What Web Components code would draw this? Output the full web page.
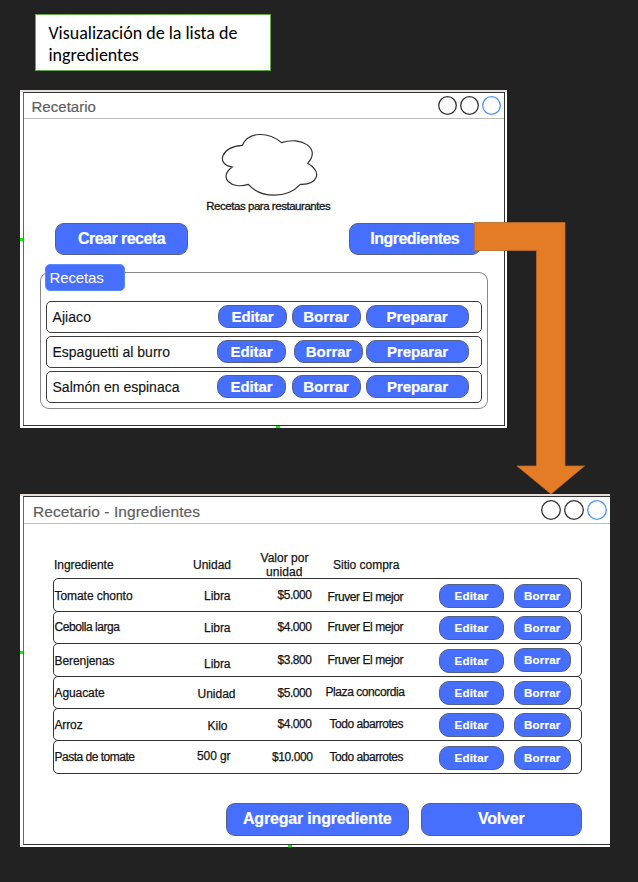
<!DOCTYPE html>
<html lang="es">
<head>
<meta charset="utf-8">
<title>Visualización de la lista de ingredientes</title>
<style>
html,body{margin:0;padding:0}
body{width:638px;height:882px;overflow:hidden;background:#222;font-family:"Liberation Sans",Arial,sans-serif;color:#151515}
</style>
</head>
<body>
<recipe-board></recipe-board>
<script>
const define = (name, html, extra) => customElements.define(name, class extends HTMLElement {
  constructor() {
    super();
    const t = document.createElement('template');
    t.innerHTML = html;
    this.attachShadow({ mode: 'open' }).appendChild(t.content.cloneNode(true));
  }
  connectedCallback() { if (extra) extra(this); }
});

/* One line of text tracked to a given width: w = width, s = font size, l = line height */
define('fit-text', `
<style>
:host{display:block;white-space:nowrap;flex:none}
span{display:inline-block;vertical-align:top}
</style><span><slot></slot></span>`, el => {
  const w = +el.getAttribute('w'), s = el.getAttribute('s'), l = el.getAttribute('l') || 16;
  el.style.fontSize = s + 'px';
  el.style.lineHeight = l + 'px';
  el.style.height = l + 'px';
  el.style.width = w + 'px';
  const span = el.shadowRoot.querySelector('span');
  const n = el.textContent.length;
  span.style.letterSpacing = (w - span.getBoundingClientRect().width) / n + 'px';
});

define('pill-button', `
<style>
:host{display:block;flex:none;box-sizing:border-box}
button{all:unset;box-sizing:border-box;display:flex;align-items:center;justify-content:center;width:100%;height:100%;
border:1px solid #56617f;border-radius:var(--r,9px);background:#476fff;color:#fff;font-weight:bold;-webkit-text-stroke:.2px #fff}
</style><button><slot></slot></button>`, el => {
  el.style.width = el.getAttribute('w') + 'px';
  el.style.height = el.getAttribute('h') + 'px';
});

define('cloud-logo', `
<style>:host{display:block;width:100px;height:66px}svg{display:block}</style>
<svg width="100" height="66" viewBox="60 33 300 198" fill="#fff" stroke="#333" stroke-width="3.6">
<path d="M127 73C145 30 205 32 245 65C300 45 366 80 323 127C370 155 350 192 301 190C262 233 182 233 145 190C95 207 52 170 97 138C45 130 65 75 127 73Z"/></svg>`);

define('app-window', `
<style>
:host{display:block;box-sizing:border-box;position:relative;background:#fff;border-top:2px solid #e6dfdc;flex:none}
.frame{box-sizing:border-box;border:1px solid #333;border-left:1.5px solid #666;height:var(--frame-h);margin-left:var(--fl);margin-right:2px}
:host([cut]) .frame{border-right:0;margin-right:0}
header{box-sizing:border-box;display:flex;align-items:center;justify-content:space-between;height:var(--bar-h);border-bottom:1px solid #bbb;padding:0 var(--pr) 0 8px;color:#606060;-webkit-text-stroke:.2px #606060}
svg{display:block}
::slotted([slot=title]){margin:var(--ty) 0 0 var(--tx,0)}
i{position:absolute;background:#0f0}
.l{left:0;top:var(--tick-y);width:3px;height:3px}
.b{bottom:0;left:var(--tick-x);width:4px;height:2px}
</style>
<div class="frame"><header><slot name="title"></slot><span class="dots"></span></header><slot></slot></div>
<i class="l"></i><i class="b"></i>`, el => {
  const d = +el.getAttribute('dot'), p = +el.getAttribute('pitch');
  const c = (k, col) => `<circle cx="${d / 2 + k * p}" cy="${d / 2}" r="${d / 2 - .7}" fill="none" stroke="${col}" stroke-width="1.3"/>`;
  el.shadowRoot.querySelector('.dots').innerHTML =
    `<svg width="${d + 2 * p}" height="${d}">${c(0, '#333')}${c(1, '#333')}${c(2, '#4d94ff')}</svg>`;
});

define('recipe-row', `
<style>
:host{display:flex;box-sizing:border-box;align-items:center;height:32px;border:1.3px solid #3c3c3c;border-radius:5px;padding-left:5.5px;--r:10px;background:#fff}
.name{width:var(--x);-webkit-text-stroke:.15px #151515}
pill-button.b{margin:0 var(--g2) 0 var(--g1)}
</style>
<div class="name"><slot></slot></div>
<pill-button w="69" h="23"><fit-text w="42" s="15">Editar</fit-text></pill-button>
<pill-button class="b" w="69" h="23"><fit-text w="45.5" s="15">Borrar</fit-text></pill-button>
<pill-button w="103" h="23"><fit-text w="61" s="15">Preparar</fit-text></pill-button>`);

define('recipe-panel', `
<style>
:host{display:block;box-sizing:border-box;position:relative;width:448px;height:137px;border:1px solid #888;border-radius:9px;padding:28px 5px 0 5px}
.tab{position:absolute;left:3.5px;top:-9px;box-sizing:border-box;width:80px;height:27px;border:1px solid #5b8cff;border-radius:5px;background:#476fff;color:#fff;padding:5px 0 0 4px}
.rows{display:flex;flex-direction:column;gap:3px}
</style>
<div class="tab"><fit-text w="54" s="15">Recetas</fit-text></div>
<div class="rows"><slot></slot></div>`);

/* Ingredient row: text columns are set on their baselines, buttons sit at the right */
const ingredients = [
  ['Tomate chonto', 78, 600, 'Libra', 204, 26.5, 600, '$5.000', 277.5, 34, 599, 'Fruver El mejor', 327.5, 75.5, 601, 595.5, 595.5],
  ['Cebolla larga', 65, 631, 'Libra', 204, 26.5, 632, '$4.000', 277.5, 34, 631, 'Fruver El mejor', 327.5, 75.5, 631, 627.5, 627.5],
  ['Berenjenas', 60, 665, 'Libra', 204, 26.5, 668, '$3.800', 277.5, 34, 664, 'Fruver El mejor', 327.5, 75.5, 664, 660.5, 659.5],
  ['Aguacate', 50, 697, 'Unidad', 197.5, 38, 698, '$5.000', 277.5, 34, 697, 'Plaza concordia', 325.5, 79, 696, 692.5, 692.5],
  ['Arroz', 28, 729, 'Kilo', 207.5, 20, 730, '$4.000', 277.5, 34, 728, 'Todo abarrotes', 329.5, 73.5, 728, 724.5, 724.5],
  ['Pasta de tomate', 80, 761, '500 gr', 197, 33.5, 760, '$10.000', 272, 40.5, 761, 'Todo abarrotes', 329.5, 73.5, 761, 757.5, 757.5]
];
customElements.define('ingredient-table', class extends HTMLElement {
  constructor() {
    super();
    const tops = [578, 610.5, 643, 675.5, 708, 740, 772.5];
    const cell = (t, x, w, base, top) => `<span class="cell" style="padding:${base - 11 - top}px 0 0 ${x + .5}px"><fit-text w="${w}" s="12" l="14">${t}</fit-text></span>`;
    const rows = ingredients.map((r, i) => {
      const top = tops[i] + 1, h = tops[i + 1] - tops[i] + 1;
      return `<div class="row" style="height:${h}px">
${cell(r[0], .5, r[1], r[2], top)}${cell(r[3], r[4] - 193, r[5], r[6], top)}${cell(r[7], r[8] - 262, r[9], r[10], top)}${cell(r[11], r[12] - 322, r[13], r[14], top)}
<span style="padding-top:${r[15] - 12 - top}px"><pill-button w="65" h="24"><fit-text w="34" s="11.5" l="14">Editar</fit-text></pill-button></span>
<span style="padding-top:${r[16] - 12 - top}px"><pill-button w="57.5" h="24"><fit-text w="36.5" s="11.5" l="14">Borrar</fit-text></pill-button></span></div>`;
    }).join('');
    this.attachShadow({ mode: 'open' }).innerHTML = `
<style>
:host{display:block;width:529px;--r:10px}
.head,.row{display:grid;grid-template-columns:139px 69px 60px 117.5px 74.5px 58px;box-sizing:border-box}
.head{height:27px;padding-left:1.5px;align-items:start;-webkit-text-stroke:.25px #151515}
.cell{-webkit-text-stroke:.25px #151515}
.row{border:1.3px solid #333;border-radius:5px;margin-bottom:-1px}
</style>
<div class="head">
<span style="padding-top:7px"><fit-text w="59.5" s="12" l="14">Ingrediente</fit-text></span>
<span style="padding-top:7px"><fit-text w="38" s="12" l="14">Unidad</fit-text></span>
<span style="margin-left:-1.5px"><fit-text w="48" s="12" l="14">Valor por</fit-text><span style="display:block;padding-left:5.5px"><fit-text w="36.5" s="12" l="14">unidad</fit-text></span></span>
<span style="padding:7px 0 0 11px"><fit-text w="66.5" s="12" l="14">Sitio compra</fit-text></span>
</div>${rows}`;
  }
});

define('note-card', `
<style>
:host{display:block;box-sizing:border-box;width:236px;height:57px;background:#fff;border:1.4px solid #69a84a;color:#000;padding:6.5px 0 0 12px;font-family:Carlito,Lato,sans-serif}
</style>
<fit-text w="189" s="18" l="22">Visualización de la lista de</fit-text>
<fit-text w="90.5" s="18" l="22">ingredientes</fit-text>`);

define('flow-arrow', `
<style>:host{position:absolute;left:470px;top:220px}svg{display:block}</style>
<svg width="120" height="280"><path d="M4.5 2.5H95V246H114.500L81 274L47 246H66.500V30.500H4.500Z" fill="#e37c24" stroke="#b9692a" stroke-width=".8"/></svg>`);

define('recipe-board', `
<style>
:host{display:flex;flex-direction:column;align-items:flex-start;box-sizing:border-box;position:relative;width:638px;height:882px;padding:14px 0 0 20px}
note-card{margin:0 0 19px 15.400px}
.home{width:487px;height:338px;--frame-h:334px;--fl:2.500px;--bar-h:26px;--pr:3.500px;--ty:2px;--tick-y:146px;--tick-x:256px;margin-bottom:66px}
.list{width:590px;height:353px;--frame-h:349px;--fl:3px;--bar-h:27px;--pr:3px;--ty:3px;--tx:1px;--tick-y:155px;--tick-x:268px}
.logo{display:flex;flex-direction:column;align-items:center;margin:12.500px 0 0 9px}
.logo fit-text{-webkit-text-stroke:.3px #151515}
.logo cloud-logo{margin-left:3px}
.actions{display:flex;justify-content:space-between;margin:9.500px 23px 16.500px 31.500px}
recipe-panel{margin-left:16.500px}
ingredient-table{margin:27px 0 0 28.500px}
.foot{display:flex;gap:12px;margin:30px 0 0 202px}
</style>
<note-card></note-card>
<app-window class="home" dot="19" pitch="22">
  <fit-text slot="title" w="64.5" s="15">Recetario</fit-text>
  <div class="logo"><cloud-logo></cloud-logo><fit-text w="124" s="11.5">Recetas para restaurantes</fit-text></div>
  <div class="actions">
    <pill-button w="133" h="32"><fit-text w="87" s="16" l="18">Crear receta</fit-text></pill-button>
    <pill-button w="132.500" h="32"><fit-text w="89" s="16" l="18">Ingredientes</fit-text></pill-button>
  </div>
  <recipe-panel>
    <recipe-row style="--x:165.500px;--g1:4.500px;--g2:5px"><fit-text w="38.500" s="14">Ajiaco</fit-text></recipe-row>
    <recipe-row style="--x:164.500px;--g1:8px;--g2:3px"><fit-text w="117.500" s="14">Espaguetti al burro</fit-text></recipe-row>
    <recipe-row style="--x:164.500px;--g1:5.500px;--g2:5.500px"><fit-text w="127" s="14">Salmón en espinaca</fit-text></recipe-row>
  </recipe-panel>
</app-window>
<app-window class="list" cut dot="20" pitch="23">
  <fit-text slot="title" w="167" s="15.500">Recetario - Ingredientes</fit-text>
  <ingredient-table></ingredient-table>
  <div class="foot">
    <pill-button w="182.500" h="33"><fit-text w="148.500" s="16" l="18">Agregar ingrediente</fit-text></pill-button>
    <pill-button w="161.500" h="33"><fit-text w="46.500" s="16" l="18">Volver</fit-text></pill-button>
  </div>
</app-window>
<flow-arrow></flow-arrow>`);
</script>
</body>
</html>
